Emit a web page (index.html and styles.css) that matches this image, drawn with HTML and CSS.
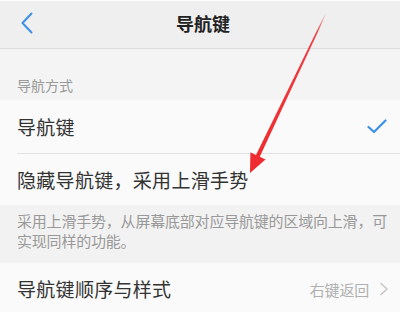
FILE: index.html
```html
<!DOCTYPE html>
<html lang="zh-CN">
<head>
  <meta charset="UTF-8">
  <meta name="viewport" content="width=device-width, initial-scale=1.0">
  <title>导航键</title>
  <link rel="stylesheet" href="styles.css">
</head>
<body>
  <div class="screen">
    <div class="header">
      <span class="back">
        <svg width="14" height="22" viewBox="0 0 14 22"><path d="M11.5 1.5 L2.5 11 L11.5 20.5" fill="none" stroke="#3d8fe8" stroke-width="2" stroke-linecap="round" stroke-linejoin="round"/></svg>
      </span>
      <h1 class="title">导航键</h1>
    </div>

    <div class="section-label">导航方式</div>

    <div class="group">
      <div class="row">
        <span class="row-text">导航键</span>
        <svg class="check" width="20" height="15" viewBox="0 0 20 15"><path d="M1.5 8 L7 13 L18.5 1.5" fill="none" stroke="#3d8fe8" stroke-width="2.2" stroke-linecap="round" stroke-linejoin="round"/></svg>
      </div>
      <div class="row row-divided">
        <span class="row-text">隐藏导航键，采用上滑手势</span>
      </div>
    </div>

    <div class="note"><span class="note-line">采用上滑手势，从屏幕底部对应导航键的区域向上滑，可</span><br>实现同样的功能。</div>

    <div class="group">
      <div class="row row-last">
        <span class="row-text">导航键顺序与样式</span>
        <span class="row-value">右键返回</span>
        <svg class="chevron" width="10" height="14" viewBox="0 0 10 14"><path d="M2 1.5 L8 7 L2 12.5" fill="none" stroke="#c6c6c6" stroke-width="1.6" stroke-linecap="round" stroke-linejoin="round"/></svg>
      </div>
    </div>

    <!-- annotation arrow drawn over the screenshot -->
    <svg class="arrow" width="400" height="312" viewBox="0 0 400 312">
      <defs>
        <linearGradient id="fade" x1="326" y1="13" x2="250" y2="172" gradientUnits="userSpaceOnUse">
          <stop offset="0" stop-color="#ee2a2e" stop-opacity="0"/>
          <stop offset="0.12" stop-color="#ee2a2e" stop-opacity="0.9"/>
          <stop offset="1" stop-color="#ee2a2e"/>
        </linearGradient>
      </defs>
      <polygon points="325.6,12.8 326.6,13.3 259.8,156.8 265.5,159.4 250,173 250.4,152.2 256,155" fill="url(#fade)"/>
    </svg>
  </div>
</body>
</html>
```

FILE: styles.css
```css
* {
  box-sizing: border-box;
  padding: 0;
  margin: 0;
}

body {
  font-family: "Noto Sans CJK SC", "Noto Sans", sans-serif;
  background-color: #f4f4f4;
  color: #333;
}

.screen {
  position: relative;
  width: 400px;
  height: 312px;
  overflow: hidden;
  background-color: #f4f4f4;
}

.header {
  position: relative;
  display: flex;
  align-items: center;
  justify-content: center;
  height: 49px;
  background-color: #efefef;
  border-top: 1px solid #fbfbfb;
  border-bottom: 1px solid #dcdcdc;
}

.back {
  position: absolute;
  left: 20px;
  top: 11px;
  display: flex;
}

.title {
  font-size: 18px;
  font-weight: bold;
  color: #222;
  line-height: 1;
  margin-left: 6px;
  margin-top: -4px;
}

.section-label {
  height: 51px;
  padding: 26px 0 0 17px;
  font-size: 14px;
  line-height: 20px;
  color: #999;
}

.group {
  background-color: #fafafa;
}

.row {
  display: flex;
  align-items: center;
  height: 53px;
  padding: 0 13px 0 17px;
}

.row-divided {
  height: 52px;
  border-top: 1px solid #e4e4e4;
  margin-left: 17px;
  padding-left: 0;
}

.row-last {
  height: 49px;
  padding-top: 3px;
}

.row-text {
  flex: 1;
  font-size: 19px;
  line-height: 24px;
  color: #333;
  letter-spacing: 0.3px;
}

.check {
  margin-top: -1px;
}

.row-value {
  font-size: 15px;
  color: #b0b0b0;
  margin-right: 10px;
  letter-spacing: -0.2px;
}

.chevron {
  margin-right: -2px;
}

.note {
  height: 58px;
  padding: 6px 0 0 17px;
  font-size: 15px;
  line-height: 20px;
  color: #999;
  background-color: #f2f2f2;
  letter-spacing: -0.2px;
}

.note-line {
  white-space: nowrap;
}

.arrow {
  position: absolute;
  left: 0;
  top: 0;
  pointer-events: none;
}
```
